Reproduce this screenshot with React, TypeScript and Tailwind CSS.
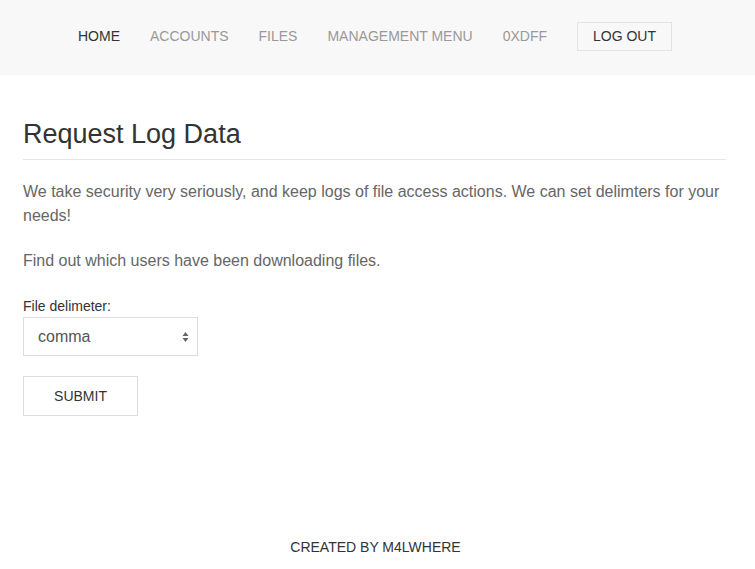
import React from "react";

const navItems = ["HOME", "ACCOUNTS", "FILES", "MANAGEMENT MENU", "0XDFF"];

const App = () => {
  return (
    <div className="min-h-screen bg-white flex flex-col text-[#333] font-['Liberation_Sans',Arial,sans-serif]">
      {/* NAV */}
      <div className="h-[75px] bg-[#f8f8f8] flex items-center justify-center pr-[20px] pb-[3px]">
        <div className="flex items-center text-[14px]">
          {navItems.map((item, i) => (
            <a
              key={item}
              className={`px-[15px] ${i === 0 ? "text-[#333]" : "text-[#999]"}`}
            >
              {item}
            </a>
          ))}
          <a className="ml-[15px] border border-[#e3e3e3] h-[29px] px-[15px] flex items-center text-[#333]">
            LOG OUT
          </a>
        </div>
      </div>

      {/* CONTENT */}
      <div className="pl-[23px] pr-[29px] pt-[43px]">
        <h2 className="text-[27px] leading-[32px] pb-[9px] border-b border-[#e5e5e5] text-[#333]">
          Request Log Data
        </h2>

        <p className="mt-[20px] text-[16px] leading-[24px] text-[#666]">
          We take security very seriously, and keep logs of file access actions. We can set delimters for your needs!
        </p>
        <p className="mt-[21px] text-[16px] leading-[24px] text-[#666]">
          Find out which users have been downloading files.
        </p>

        <form className="mt-[23px]">
          <label className="block text-[14px] leading-[20px] text-[#333]">File delimeter:</label>
          <div className="relative w-[175px] mt-[1px]">
            <select className="appearance-none block w-full h-[39px] border border-[#ddd] bg-white pl-[14px] text-[16px] text-[#555] outline-none">
              <option>comma</option>
            </select>
            <svg
              className="absolute right-[9px] top-[14px] pointer-events-none"
              width="7"
              height="12"
              viewBox="0 0 7 12"
            >
              <path d="M3.5 1 L6.5 5 L0.5 5 Z" fill="#666" />
              <path d="M3.5 11 L6.5 7 L0.5 7 Z" fill="#666" />
            </svg>
          </div>

          <button
            type="button"
            className="mt-[20px] w-[115px] h-[40px] border border-[#ddd] bg-white text-[14px] text-[#333]"
          >
            SUBMIT
          </button>
        </form>
      </div>

      {/* FOOTER */}
      <div className="mt-auto pb-[11px] pr-[4px] text-center text-[14px] text-[#333]">
        CREATED BY M4LWHERE
      </div>
    </div>
  );
};

export default App;
